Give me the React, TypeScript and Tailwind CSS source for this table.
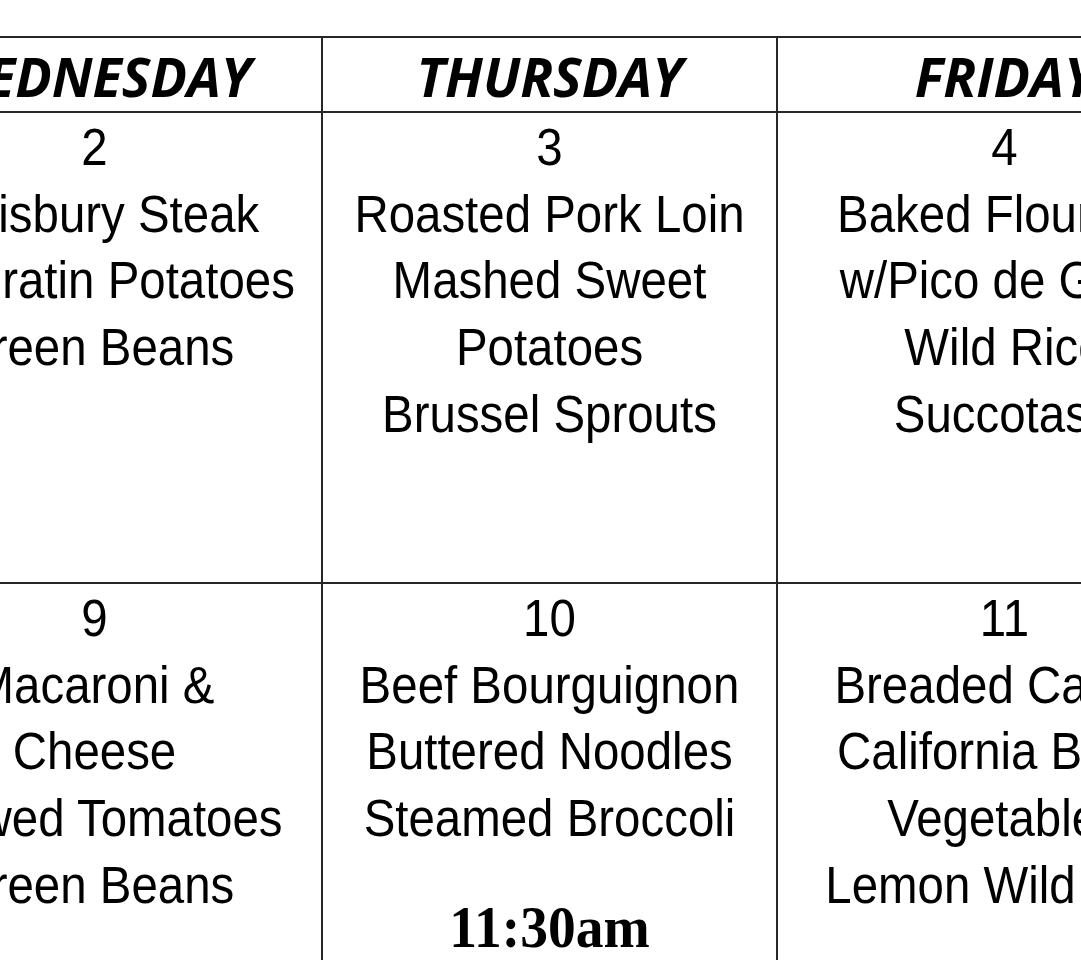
import React from "react";

type Week = { n: string; items: string[]; time?: string };
type Day = { name: string; weeks: Week[] };

const days: Day[] = [
  {
    name: "WEDNESDAY",
    weeks: [
      { n: "2", items: ["Salisbury Steak", "Au Gratin Potatoes", "Green Beans"] },
      { n: "9", items: ["Macaroni &", "Cheese", "Stewed Tomatoes", "Green Beans"] },
    ],
  },
  {
    name: "THURSDAY",
    weeks: [
      { n: "3", items: ["Roasted Pork Loin", "Mashed Sweet", "Potatoes", "Brussel Sprouts"] },
      {
        n: "10",
        items: ["Beef Bourguignon", "Buttered Noodles", "Steamed Broccoli"],
        time: "11:30am",
      },
    ],
  },
  {
    name: "FRIDAY",
    weeks: [
      { n: "4", items: ["Baked Flounder", "w/Pico de Gallo", "Wild Rice", "Succotash"] },
      { n: "11", items: ["Breaded Catfish", "California Blend", "Vegetables", "Lemon Wild Rice"] },
    ],
  },
];

function DayCell({ week }: { week: Week }) {
  return (
    <div className="bg-white pt-[2px] text-center">
      <div className="scale-x-[0.93] font-['Liberation_Sans',Arial,sans-serif] text-[51px] leading-[66.7px] text-black">
        <div className="whitespace-nowrap">{week.n}</div>
        {week.items.map((it, i) => (
          <div key={i} className="whitespace-nowrap">
            {it}
          </div>
        ))}
      </div>
      {week.time && (
        <div className="mt-[42px] scale-x-[0.94] whitespace-nowrap font-['Liberation_Serif','Times_New_Roman',serif] text-[59px] font-bold leading-[64px] text-black">
          {week.time}
        </div>
      )}
    </div>
  );
}

export default function App() {
  return (
    <div className="h-[960px] w-[1081px] overflow-hidden bg-white">
      <div className="pt-[36px]">
        <div className="-ml-[132px] grid w-max grid-cols-[453px_453px_453px] grid-rows-[73px_469px_420px] gap-[2px] border-t-2 border-[#262626] bg-[#262626]">
          {days.map((d) => (
            <div
              key={d.name}
              className="flex items-center justify-center bg-white pt-[2px] font-['Open_Sans',sans-serif] text-[54px] font-bold italic leading-none text-black"
            >
              {d.name}
            </div>
          ))}
          {days.map((d) => (
            <DayCell key={d.name + "1"} week={d.weeks[0]} />
          ))}
          {days.map((d) => (
            <DayCell key={d.name + "2"} week={d.weeks[1]} />
          ))}
        </div>
      </div>
    </div>
  );
}
